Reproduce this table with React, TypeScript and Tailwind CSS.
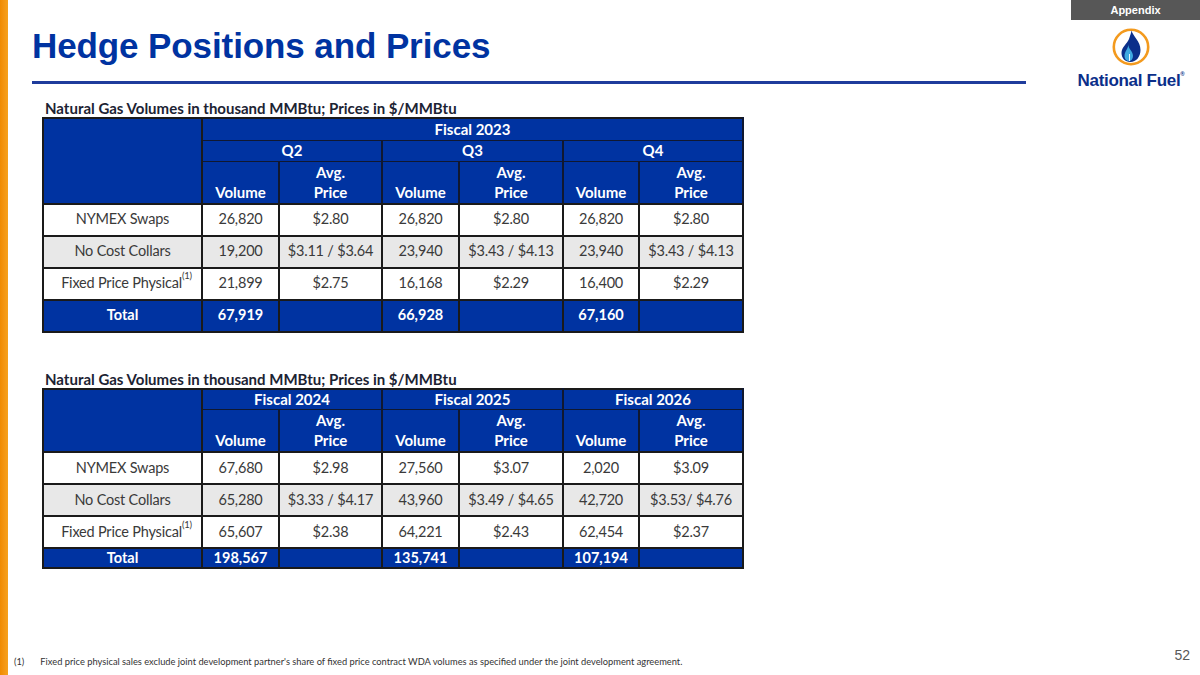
import React from 'react';

const BLUE = 'bg-[#0033a1]';

type Row = { label: string; sup?: boolean; gray?: boolean; cells: string[] };

const Logo = () => (
  <div className="flex flex-col items-center">
    <svg width="40" height="40" viewBox="0 0 40 40">
      <circle cx="20" cy="20" r="17.2" fill="#fff" stroke="#f39a1e" strokeWidth="2.6" />
      <path d="M20.5 3.5 C22 9.5 29.5 14 29.5 23 C29.5 30 25 35 19.5 35 C14 35 10.5 31 10.5 26 C10.5 20 16 17 18 12 C19 9 20 6.5 20.5 3.5 Z" fill="#0b2f8a" />
      <path d="M17.5 17.5 C17 22 22 24 22 29 C22 32 20 34 18 34 C15 34 13.5 31.5 13.5 29 C13.5 24.5 17 22 17.5 17.5 Z" fill="#3fa9e0" />
      <path d="M18.5 27 L18.5 34" stroke="#fff" strokeWidth="0.9" />
    </svg>
    <div className="mt-[5px] font-['Liberation_Sans',Arial,sans-serif] font-bold text-[17px] leading-none text-[#0b2f8a] tracking-[-0.3px]">
      National Fuel<sup className="text-[6px] align-super">®</sup>
    </div>
  </div>
);

const cellFont = "font-['Lato','Open_Sans',sans-serif]";
const dataCell = 'border-2 border-[#1a1a1a] text-center text-[14.5px] tracking-[-0.2px] text-[#3a3a3a] leading-none whitespace-nowrap';
const totalCell = 'border-2 border-[#1a1a1a] text-center text-[14.5px] font-bold text-white leading-none';

function HedgeTable({
  fiscalHeader,
  groups,
  rows,
  totals,
  totalHeight,
}: {
  fiscalHeader?: string;
  groups: string[];
  rows: Row[];
  totals: string[];
  totalHeight: string;
}) {
  const th = `${BLUE} text-white font-bold text-[15px] border-x-2 border-[#101830]`;
  return (
    <table className={`${cellFont} table-fixed border-collapse border-2 border-[#1a1a1a] w-[700px]`}>
      <colgroup>
        <col className="w-[159px]" />
        <col className="w-[77px]" />
        <col className="w-[103px]" />
        <col className="w-[77px]" />
        <col className="w-[104px]" />
        <col className="w-[76px]" />
        <col className="w-[104px]" />
      </colgroup>
      <thead>
        {fiscalHeader && (
          <tr className="h-[22px]">
            <th rowSpan={3} className={`${BLUE} border-2 border-[#1a1a1a]`} />
            <th colSpan={6} className={`${th} leading-none border-b-[1.5px]`}>
              {fiscalHeader}
            </th>
          </tr>
        )}
        <tr className="h-[21px]">
          {!fiscalHeader && <th rowSpan={2} className={`${BLUE} border-2 border-[#1a1a1a]`} />}
          {groups.map((g) => (
            <th key={g} colSpan={2} className={`${th} leading-none border-b-[1.5px]`}>
              {g}
            </th>
          ))}
        </tr>
        <tr className="h-[41px]">
          {groups.map((g) => (
            <React.Fragment key={g}>
              <th className={`${th} align-bottom leading-[20px] pb-[1px] border-b-2 border-b-[#1a1a1a]`}>Volume</th>
              <th className={`${th} align-bottom leading-[20px] pb-[1px] border-b-2 border-b-[#1a1a1a]`}>
                Avg.
                <br />
                Price
              </th>
            </React.Fragment>
          ))}
        </tr>
      </thead>
      <tbody>
        {rows.map((r) => (
          <tr key={r.label} className={`h-[32px] ${r.gray ? 'bg-[#e8e8e8]' : 'bg-white'}`}>
            <td className={dataCell}>
              <span className={r.sup ? 'pl-[8px]' : ''}>{r.label}</span>
              {r.sup && <span className="relative -top-[9px] text-[9.5px] leading-none">(1)</span>}
            </td>
            {r.cells.map((c, i) => (
              <td key={i} className={dataCell}>
                {c}
              </td>
            ))}
          </tr>
        ))}
        <tr className={`${totalHeight} ${BLUE}`}>
          <td className={totalCell}>Total</td>
          {totals.map((t, i) => (
            <React.Fragment key={i}>
              <td className={totalCell}>{t}</td>
              <td className="border-2 border-[#1a1a1a]" />
            </React.Fragment>
          ))}
        </tr>
      </tbody>
    </table>
  );
}

const caption = 'Natural Gas Volumes in thousand MMBtu; Prices in $/MMBtu';

export default function App() {
  return (
    <div className="w-[1200px] h-[675px] bg-white flex overflow-hidden">
      <div className="w-[8px] h-full bg-gradient-to-r from-[#f08a00] to-[#f7a11c] shrink-0" />
      <div className="flex-1 flex flex-col">
        <div className="flex items-start">
          <div className="flex flex-col w-[1018px] shrink-0">
            <h1 className="pl-[24px] pt-[28px] font-['Liberation_Sans',Arial,sans-serif] font-bold text-[35px] leading-none text-[#0033a1] tracking-[-0.1px]">
              Hedge Positions and Prices
            </h1>
            <div className="ml-[24px] mt-[18px] h-[3px] bg-[#1f3c9c]" />
          </div>
          <div className="flex-1 flex flex-col items-end">
            <div className="w-[129px] h-[20px] bg-[#575757] text-white text-[11px] font-bold font-['Liberation_Sans',Arial,sans-serif] flex items-center justify-center">
              Appendix
            </div>
            <div className="w-[120px] mr-[9px] flex justify-center pt-[7px]">
              <Logo />
            </div>
          </div>
        </div>

        <div className="pl-[34px] pt-[12px] flex flex-col">
          <div className={`${cellFont} font-bold text-[15px] text-[#1c2333] leading-none pl-[3px] pb-[1px]`}>{caption}</div>
          <HedgeTable
            fiscalHeader="Fiscal 2023"
            groups={['Q2', 'Q3', 'Q4']}
            rows={[
              { label: 'NYMEX Swaps', cells: ['26,820', '$2.80', '26,820', '$2.80', '26,820', '$2.80'] },
              { label: 'No Cost Collars', gray: true, cells: ['19,200', '$3.11 / $3.64', '23,940', '$3.43 / $4.13', '23,940', '$3.43 / $4.13'] },
              { label: 'Fixed Price Physical', sup: true, cells: ['21,899', '$2.75', '16,168', '$2.29', '16,400', '$2.29'] },
            ]}
            totals={['67,919', '66,928', '67,160']}
            totalHeight="h-[32px]"
          />

          <div className={`${cellFont} font-bold text-[15px] text-[#1c2333] leading-none pl-[3px] pb-[1px] mt-[39px]`}>{caption}</div>
          <HedgeTable
            groups={['Fiscal 2024', 'Fiscal 2025', 'Fiscal 2026']}
            rows={[
              { label: 'NYMEX Swaps', cells: ['67,680', '$2.98', '27,560', '$3.07', '2,020', '$3.09'] },
              { label: 'No Cost Collars', gray: true, cells: ['65,280', '$3.33 / $4.17', '43,960', '$3.49 / $4.65', '42,720', '$3.53/ $4.76'] },
              { label: 'Fixed Price Physical', sup: true, cells: ['65,607', '$2.38', '64,221', '$2.43', '62,454', '$2.37'] },
            ]}
            totals={['198,567', '135,741', '107,194']}
            totalHeight="h-[20px]"
          />
        </div>

        <div className="mt-auto flex items-end justify-between pb-[3px]">
          <div className={`${cellFont} text-[9.3px] text-[#333] flex gap-[16px] pl-[6px] pb-[3px]`}>
            <span>(1)</span>
            <span>
              Fixed price physical sales exclude joint development partner's share of fixed price contract WDA volumes as specified under the joint development agreement.
            </span>
          </div>
          <div className="font-['Liberation_Sans',Arial,sans-serif] text-[14px] text-[#595959] pr-[10px] pb-[6px]">52</div>
        </div>
      </div>
    </div>
  );
}
